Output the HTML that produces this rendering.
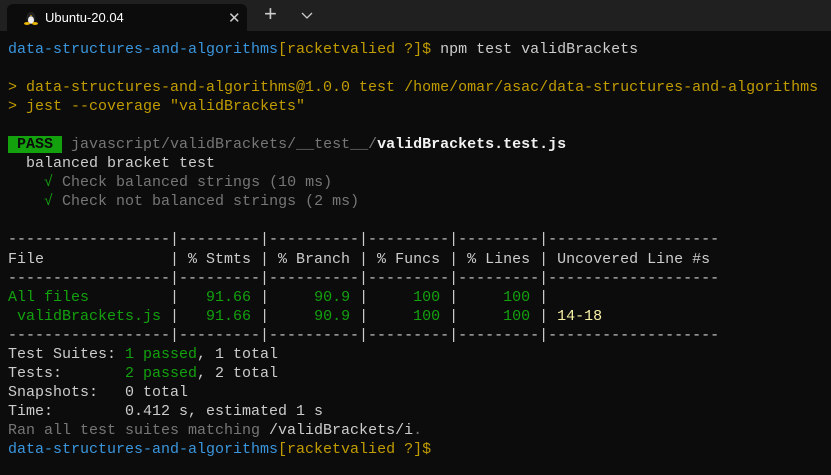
<!DOCTYPE html>
<html><head><meta charset="utf-8"><style>
body{margin:0;width:831px;height:475px;background:#0c0c0c;overflow:hidden;position:relative}
.bar{position:absolute;left:0;top:0;width:831px;height:31px;background:#202020}
.tab{position:absolute;left:7px;top:4px;width:240px;height:27px;background:#0c0c0c;border-radius:6px 6px 0 0}
.tab span{position:absolute;left:38px;top:6px;font:13px "Liberation Sans",sans-serif;color:#fff}
.x{position:absolute;left:221px;top:5px;color:#ccc;font:15px "Liberation Sans",sans-serif}
.plus{position:absolute;left:264px;top:1px;color:#ccc;font:22px "Liberation Sans",sans-serif}
.chev{position:absolute;left:301px;top:12px}
pre{position:absolute;left:8px;top:40px;margin:0;font:15px/19.05px "Liberation Mono",monospace;color:#cccccc}
.b{color:#3a96dd}.y{color:#c19c00}.g{color:#13a10e}.gr{color:#767676}.w{color:#f2f2f2;font-weight:bold}.ly{color:#f9f1a5}
.pass{background:#13a10e;color:#0c0c0c;font-weight:bold}
</style></head><body>
<div class="bar"><div class="tab">
<svg style="position:absolute;left:17px;top:6px" width="14" height="15" viewBox="0 0 14 15"><ellipse cx="7" cy="8" rx="4.5" ry="6" fill="#222"/><ellipse cx="7" cy="10" rx="3" ry="3.8" fill="#eee"/><ellipse cx="3" cy="13.5" rx="3" ry="1.5" fill="#e8b400"/><ellipse cx="11" cy="13.5" rx="3" ry="1.5" fill="#e8b400"/><path d="M6 5h2l-1 1.3z" fill="#e8b400"/></svg>
<span>Ubuntu-20.04</span><div class="x">✕</div></div>
<div class="plus">+</div>
<svg class="chev" width="12" height="8" viewBox="0 0 12 8"><path d="M1 1l5 5 5-5" stroke="#ccc" stroke-width="1.3" fill="none"/></svg>
</div>
<pre><span class="b">data-structures-and-algorithms</span><span class="y">[racketvalied ?]$</span> npm test validBrackets

<span class="y">&gt; data-structures-and-algorithms@1.0.0 test /home/omar/asac/data-structures-and-algorithms
&gt; jest --coverage "validBrackets"</span>

<span class="pass"> PASS </span> <span class="gr">javascript/validBrackets/__test__/</span><span class="w">validBrackets.test.js</span>
  balanced bracket test
<span class="gr">    <span class="g">√</span> Check balanced strings (10 ms)
    <span class="g">√</span> Check not balanced strings (2 ms)</span>

------------------|---------|----------|---------|---------|-------------------
File              | % Stmts | % Branch | % Funcs | % Lines | Uncovered Line #s
------------------|---------|----------|---------|---------|-------------------
<span class="g">All files</span>         | <span class="g">  91.66</span> | <span class="g">    90.9</span> | <span class="g">    100</span> | <span class="g">    100</span> |
<span class="g"> validBrackets.js</span> | <span class="g">  91.66</span> | <span class="g">    90.9</span> | <span class="g">    100</span> | <span class="g">    100</span> | <span class="ly">14-18</span>
------------------|---------|----------|---------|---------|-------------------
Test Suites: <span class="g">1 passed</span>, 1 total
Tests:       <span class="g">2 passed</span>, 2 total
Snapshots:   0 total
Time:        0.412 s, estimated 1 s
<span class="gr">Ran all test suites matching </span>/validBrackets/i<span class="gr">.</span>
<span class="b">data-structures-and-algorithms</span><span class="y">[racketvalied ?]$</span></pre>
</body></html>
